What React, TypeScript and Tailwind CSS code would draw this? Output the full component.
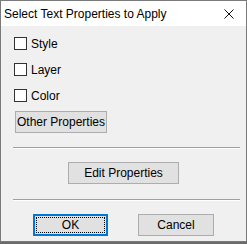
import React from "react";

const font = { fontFamily: '"Segoe UI", "Liberation Sans", Arial, sans-serif' };

const Check = ({ label }: { label: string }) => (
  <label className="flex h-[13px] items-center gap-[4px]">
    <span className="h-[13px] w-[13px] shrink-0 border border-[#333333] bg-white" />
    <span className="text-[12px] leading-none text-black">{label}</span>
  </label>
);

const Separator = () => (
  <div className="ml-[12px] w-[227px]">
    <div className="h-px bg-[#a0a0a0]" />
    <div className="h-px bg-white" />
  </div>
);

export default function App() {
  return (
    <div className="flex h-[244px] w-[247px] flex-col bg-[#6b6b6b]" style={font}>
      <div className="flex h-[242px] flex-col border border-[#7a7a7a] bg-[#f0f0f0]">
        {/* title bar */}
        <div className="flex h-[25px] items-center justify-between bg-white pl-[3px] pr-[12px]">
          <span className="text-[12px] text-black">Select Text Properties to Apply</span>
          <svg width="10" height="10" viewBox="0 0 10 10" className="mt-[1px]">
            <path d="M0.5 0.5 L9.5 9.5 M9.5 0.5 L0.5 9.5" stroke="#111" strokeWidth="1" />
          </svg>
        </div>

        {/* body */}
        <div className="flex flex-col pt-[11px]">
          <div className="flex flex-col gap-[13px] pl-[13px]">
            <Check label="Style" />
            <Check label="Layer" />
            <Check label="Color" />
          </div>

          <button className="ml-[14px] mt-[9px] h-[22px] w-[92px] border border-[#adadad] bg-[#e1e1e1] text-[12px] leading-none text-black">
            Other Properties
          </button>

          <div className="mt-[14px]">
            <Separator />
          </div>

          <button className="ml-[67px] mt-[13px] h-[22px] w-[111px] border border-[#adadad] bg-[#e1e1e1] text-[12px] leading-none text-black">
            Edit Properties
          </button>

          <div className="mt-[15px]">
            <Separator />
          </div>

          <div className="mt-[13px] flex gap-[30px] pl-[32px]">
            <button className="flex h-[22px] w-[75px] items-center justify-center border-2 border-[#0078d7] bg-[#e1e1e1] p-[1px] text-[12px] leading-none text-black">
              <span className="flex h-full w-full items-center justify-center border border-dotted border-black">
                OK
              </span>
            </button>
            <button className="h-[22px] w-[76px] border border-[#adadad] bg-[#e1e1e1] text-[12px] leading-none text-black">
              Cancel
            </button>
          </div>
        </div>
      </div>
    </div>
  );
}
